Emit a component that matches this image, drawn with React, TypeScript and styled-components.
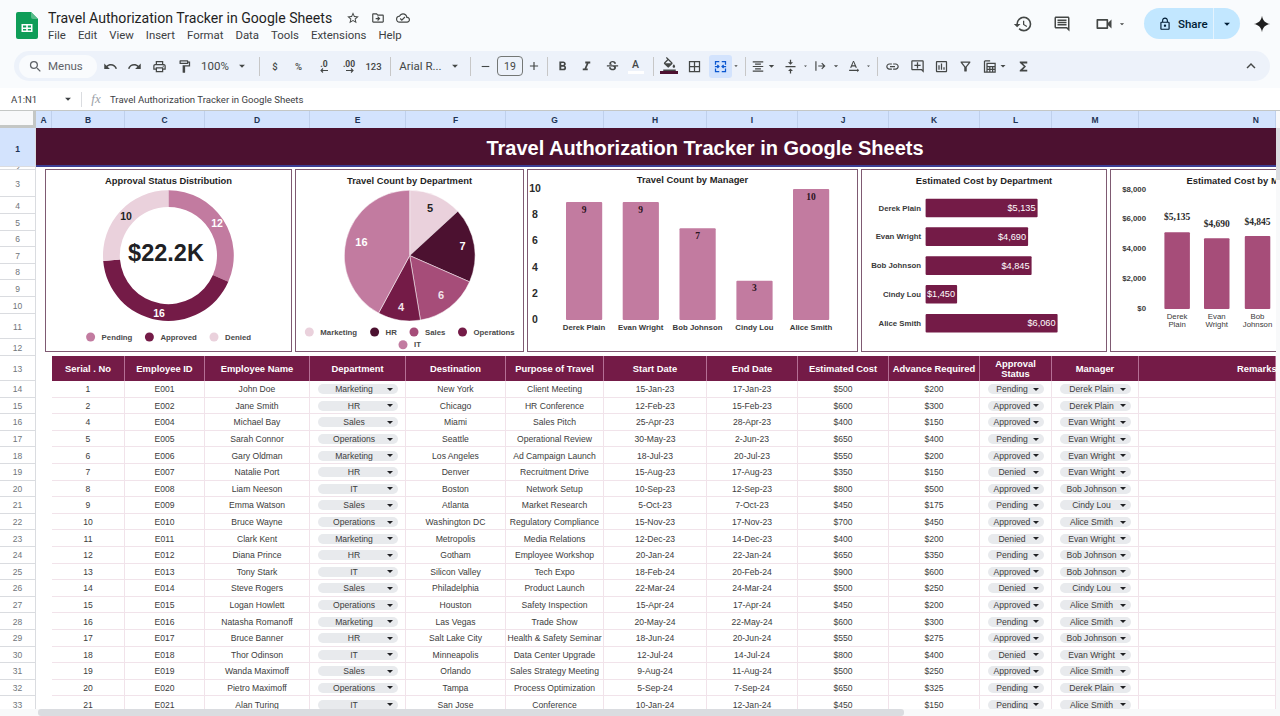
import { createGlobalStyle, styled } from "styled-components";
import {
  MdAdd,
  MdArrowDropDown,
  MdBorderAll,
  MdExpandLess,
  MdFormatAlignCenter,
  MdFormatBold,
  MdFormatColorFill,
  MdFormatItalic,
  MdFunctions,
  MdHistory,
  MdLink,
  MdLockOutline,
  MdOutlineAddComment,
  MdOutlineCloudDone,
  MdOutlineComment,
  MdOutlineDriveFileMove,
  MdOutlineFilterAlt,
  MdOutlineFormatPaint,
  MdOutlineInsertChart,
  MdOutlinePrint,
  MdOutlineTextRotationNone,
  MdOutlineVideocam,
  MdRedo,
  MdRemove,
  MdSearch,
  MdStarBorder,
  MdStrikethroughS,
  MdUndo,
  MdVerticalAlignCenter,
} from "react-icons/md";

const PINK = "#c27ba0";
const ROSE = "#a64d79";
const WINE = "#741b47";
const DARK = "#4c1130";
const PALE = "#ead1dc";

const rows = [
  ["1", "E001", "John Doe", "Marketing", "New York", "Client Meeting", "15-Jan-23", "17-Jan-23", "$500", "$200", "Pending", "Derek Plain"],
  ["2", "E002", "Jane Smith", "HR", "Chicago", "HR Conference", "12-Feb-23", "15-Feb-23", "$600", "$300", "Approved", "Derek Plain"],
  ["4", "E004", "Michael Bay", "Sales", "Miami", "Sales Pitch", "25-Apr-23", "28-Apr-23", "$400", "$150", "Approved", "Evan Wright"],
  ["5", "E005", "Sarah Connor", "Operations", "Seattle", "Operational Review", "30-May-23", "2-Jun-23", "$650", "$400", "Pending", "Evan Wright"],
  ["6", "E006", "Gary Oldman", "Marketing", "Los Angeles", "Ad Campaign Launch", "18-Jul-23", "20-Jul-23", "$550", "$200", "Approved", "Evan Wright"],
  ["7", "E007", "Natalie Port", "HR", "Denver", "Recruitment Drive", "15-Aug-23", "17-Aug-23", "$350", "$150", "Denied", "Evan Wright"],
  ["8", "E008", "Liam Neeson", "IT", "Boston", "Network Setup", "10-Sep-23", "12-Sep-23", "$800", "$500", "Approved", "Bob Johnson"],
  ["9", "E009", "Emma Watson", "Sales", "Atlanta", "Market Research", "5-Oct-23", "7-Oct-23", "$450", "$175", "Pending", "Cindy Lou"],
  ["10", "E010", "Bruce Wayne", "Operations", "Washington DC", "Regulatory Compliance", "15-Nov-23", "17-Nov-23", "$700", "$450", "Approved", "Alice Smith"],
  ["11", "E011", "Clark Kent", "Marketing", "Metropolis", "Media Relations", "12-Dec-23", "14-Dec-23", "$400", "$200", "Denied", "Evan Wright"],
  ["12", "E012", "Diana Prince", "HR", "Gotham", "Employee Workshop", "20-Jan-24", "22-Jan-24", "$650", "$350", "Pending", "Bob Johnson"],
  ["13", "E013", "Tony Stark", "IT", "Silicon Valley", "Tech Expo", "18-Feb-24", "20-Feb-24", "$900", "$600", "Approved", "Bob Johnson"],
  ["14", "E014", "Steve Rogers", "Sales", "Philadelphia", "Product Launch", "22-Mar-24", "24-Mar-24", "$500", "$250", "Denied", "Cindy Lou"],
  ["15", "E015", "Logan Howlett", "Operations", "Houston", "Safety Inspection", "15-Apr-24", "17-Apr-24", "$450", "$200", "Approved", "Alice Smith"],
  ["16", "E016", "Natasha Romanoff", "Marketing", "Las Vegas", "Trade Show", "20-May-24", "22-May-24", "$600", "$300", "Pending", "Alice Smith"],
  ["17", "E017", "Bruce Banner", "HR", "Salt Lake City", "Health & Safety Seminar", "18-Jun-24", "20-Jun-24", "$550", "$275", "Approved", "Bob Johnson"],
  ["18", "E018", "Thor Odinson", "IT", "Minneapolis", "Data Center Upgrade", "12-Jul-24", "14-Jul-24", "$800", "$400", "Denied", "Evan Wright"],
  ["19", "E019", "Wanda Maximoff", "Sales", "Orlando", "Sales Strategy Meeting", "9-Aug-24", "11-Aug-24", "$500", "$250", "Approved", "Alice Smith"],
  ["20", "E020", "Pietro Maximoff", "Operations", "Tampa", "Process Optimization", "5-Sep-24", "7-Sep-24", "$650", "$325", "Pending", "Derek Plain"],
  ["21", "E021", "Alan Turing", "IT", "San Jose", "Conference", "10-Jan-24", "12-Jan-24", "$450", "$150", "Pending", "Alice Smith"],
];

const headers = [
  "Serial . No", "Employee ID", "Employee Name", "Department", "Destination", "Purpose of Travel",
  "Start Date", "End Date", "Estimated Cost", "Advance Required",
];

const menus = ["File", "Edit", "View", "Insert", "Format", "Data", "Tools", "Extensions", "Help"];
const columns = ["B", "C", "D", "E", "F", "G", "H", "I", "J", "K", "L", "M", "N"];
const topRows = [39, 3, 27, 17, 17, 16, 17, 16, 17, 17, 25, 17, 25];
const GRID = "73px 80px 105px 96px 100px 98px 103px 91px 91px 91px 72px 87px 137px";

const GlobalStyle = createGlobalStyle`
  html, body {
    margin: 0;
    height: 716px;
    overflow: hidden;
    background: #fff;
  }
  * { box-sizing: border-box; }
`;

const Page = styled.div`
  position: relative;
  width: 1280px;
  height: 716px;
  overflow: hidden;
  display: flex;
  flex-direction: column;
  background: #f9fbfd;
  font-family: "Liberation Sans", Arial, sans-serif;
`;

const TopBar = styled.header`
  height: 51px;
  flex: none;
  display: flex;
  padding: 8px 0 0 16px;
`;

const TitleBlock = styled.div`
  margin-left: 10px;
  display: flex;
  flex-direction: column;
`;

const TitleLine = styled.div`
  display: flex;
  align-items: center;
  height: 20px;
  color: #1f1f1f;
  font: 400 14.1px Roboto, sans-serif;
`;

const TitleIcons = styled.div`
  display: flex;
  align-items: center;
  gap: 11px;
  margin-left: 14px;
  color: #444746;
`;

const MenuLine = styled.nav`
  display: flex;
  gap: 12px;
  font: 400 11.4px/15px Roboto, sans-serif;
  color: #3c4043;
`;

const Actions = styled.div`
  margin-left: auto;
  display: flex;
  align-items: flex-start;
  color: #444746;
`;

const ActionIcon = styled.div<{ $w: number }>`
  width: ${(p) => p.$w}px;
  height: 31px;
  display: flex;
  align-items: center;
  justify-content: center;
`;

const VideoIcon = styled(ActionIcon)`
  margin-left: 9px;
`;

const SparkSlot = styled(ActionIcon)`
  padding-left: 4px;
`;

const ShareButton = styled.div`
  width: 96px;
  height: 31px;
  margin-left: 17px;
  border-radius: 16px;
  background: #c2e7ff;
  display: flex;
  align-items: center;
  color: #001d35;
  font: 500 11.5px Roboto, sans-serif;
`;

const ShareMain = styled.div`
  flex: 1;
  height: 100%;
  display: flex;
  align-items: center;
  gap: 6px;
  padding-left: 14px;
  border-right: 1px solid #e4f3fe;
`;

const ShareCaret = styled.div`
  width: 26px;
  display: flex;
  justify-content: center;
`;

const Toolbar = styled.div`
  height: 30px;
  flex: none;
  margin: 0 10px 0 14px;
  padding-left: 5px;
  display: flex;
  align-items: center;
  border-radius: 15px;
  background: #edf2fa;
  color: #444746;
`;

const SearchPill = styled.div`
  width: 78px;
  height: 23px;
  flex: none;
  margin-right: 1px;
  padding-left: 9px;
  display: flex;
  align-items: center;
  gap: 5px;
  border-radius: 12px;
  background: #f9fbfd;
  color: #5f6368;
  font: 400 11.5px Roboto, sans-serif;
`;

const Tool = styled.div<{ $w: number; $on?: boolean }>`
  width: ${(p) => p.$w}px;
  height: 23px;
  flex: none;
  display: flex;
  align-items: center;
  justify-content: center;
  border-radius: 3px;
  background: ${(p) => (p.$on ? "#d3e3fd" : "transparent")};
  color: ${(p) => (p.$on ? "#0b57d0" : "#444746")};
  font: 400 11.5px Roboto, sans-serif;
`;

const ToolSmall = styled(Tool)`
  font-size: 9.5px;
  font-weight: 500;
`;

const Stacked = styled.span`
  display: flex;
  flex-direction: column;
  align-items: center;
  font: 700 8.5px/8px Roboto, sans-serif;
`;

const Sep = styled.div`
  width: 1px;
  height: 19px;
  flex: none;
  margin: 0 5px;
  background: #c7c7c7;
`;

const SizeBox = styled.div`
  width: 26px;
  height: 20px;
  flex: none;
  margin: 0 3px;
  display: flex;
  align-items: center;
  justify-content: center;
  border: 1px solid #747775;
  border-radius: 4px;
  color: #444746;
  font: 400 10.5px Roboto, sans-serif;
`;

const ColorLetter = styled.span<{ $bar: string }>`
  display: flex;
  flex-direction: column;
  align-items: center;
  font: 500 10.5px/11px Roboto, sans-serif;
  &::after {
    content: "";
    width: 16px;
    height: 3px;
    margin-top: 1px;
    background: ${(p) => p.$bar};
  }
`;

const FillIcon = styled.span`
  display: flex;
  flex-direction: column;
  align-items: center;
  height: 19px;
  overflow: hidden;
  &::after {
    content: "";
    flex: none;
    width: 18px;
    height: 3px;
    margin-top: -1px;
    background: ${DARK};
  }
`;

const ToolbarEnd = styled.div`
  margin-left: auto;
  margin-right: 10px;
  display: flex;
  color: #444746;
`;

const FormulaBar = styled.div`
  height: 23px;
  flex: none;
  margin-top: 7px;
  display: flex;
  align-items: center;
  background: #fff;
  border-bottom: 1px solid #c4c7c5;
  color: #3c4043;
  font: 400 9.6px Roboto, sans-serif;
`;

const NameBox = styled.div`
  width: 82px;
  height: 15px;
  padding: 0 6px 0 11px;
  display: flex;
  align-items: center;
  justify-content: space-between;
  border-right: 1px solid #dadce0;
`;

const FxMark = styled.span`
  width: 28px;
  text-align: center;
  color: #9aa0a6;
  font: italic 400 13px "Liberation Serif", serif;
`;

const ColumnBar = styled.div`
  height: 17px;
  flex: none;
  display: flex;
  background: #d3e3fd;
`;

const Corner = styled.div`
  width: 36px;
  flex: none;
  background: #f8f9fa;
  border-right: 3px solid #c4c7c5;
  border-bottom: 3px solid #c4c7c5;
`;

const ColumnGrid = styled.div`
  display: grid;
  width: 1240px;
  grid-template-columns: 16px ${GRID};
`;

const ColumnLabel = styled.div<{ $far?: boolean }>`
  display: flex;
  align-items: center;
  justify-content: ${(p) => (p.$far ? "flex-end" : "center")};
  padding-right: ${(p) => (p.$far ? "16px" : "0")};
  border-right: 1px solid #bfd0ec;
  color: #1f3354;
  font-size: 8.5px;
  font-weight: 700;
`;

const Sheet = styled.div`
  flex: 1;
  min-height: 0;
  display: flex;
  overflow: hidden;
  background: #fff;
`;

const RowHeaders = styled.div`
  width: 36px;
  flex: none;
  background: #fff;
`;

const RowLabel = styled.div<{ $h: number; $on?: boolean }>`
  height: ${(p) => p.$h}px;
  padding-top: ${(p) => (p.$on ? "4px" : p.$h > 10 ? "1px" : "0")};
  display: flex;
  align-items: center;
  justify-content: center;
  overflow: hidden;
  background: ${(p) => (p.$on ? "#d3e3fd" : "#fff")};
  border-right: 1px solid #dadce0;
  border-bottom: 1px solid #dadce0;
  color: ${(p) => (p.$on ? "#1f3354" : "#70757a")};
  font-size: 8.5px;
  font-weight: ${(p) => (p.$on ? 700 : 400)};
`;

const Canvas = styled.div`
  width: 1240px;
  flex: none;
  overflow: hidden;
`;

const Banner = styled.div`
  height: 39px;
  padding: 4px 0 0 98px;
  display: flex;
  align-items: center;
  justify-content: center;
  background: ${DARK};
  border-bottom: 2px solid #3c3f95;
  color: #fff;
  font-size: 20px;
  font-weight: 700;
`;

const ChartRow = styled.div`
  height: 189px;
  padding: 2px 0 0 9px;
  display: flex;
  gap: 3px;
  overflow: hidden;
`;

const ChartCard = styled.section<{ $w: number }>`
  width: ${(p) => p.$w}px;
  height: 183px;
  flex: none;
  border: 1px solid #7f5a72;
  background: #fff;
`;

const ChartTitle = styled.h3<{ $up?: boolean }>`
  height: 20px;
  margin: 0;
  padding-top: ${(p) => (p.$up ? "5px" : "6px")};
  text-align: center;
  color: #1f1f1f;
  font-size: 9.4px;
  line-height: 10px;
  font-weight: 700;
  white-space: nowrap;
`;

const ChartArea = styled.svg`
  display: block;
  overflow: visible;
`;

const Label = styled.text<{ $size?: number; $weight?: number; $fill?: string; $serif?: boolean }>`
  font-family: ${(p) => (p.$serif ? '"Liberation Serif", serif' : '"Liberation Sans", sans-serif')};
  font-size: ${(p) => p.$size ?? 8}px;
  font-weight: ${(p) => p.$weight ?? 700};
  fill: ${(p) => p.$fill ?? "#3a3a3a"};
  dominant-baseline: central;
`;

const Table = styled.div`
  margin-left: 16px;
  width: 1224px;
`;

const HeadRow = styled.div`
  height: 25px;
  display: grid;
  grid-template-columns: ${GRID};
  background: ${WINE};
  color: #fff;
  font-size: 9.4px;
  font-weight: 700;
`;

const HeadCell = styled.div<{ $indent?: number }>`
  display: flex;
  align-items: center;
  justify-content: ${(p) => (p.$indent ? "flex-start" : "center")};
  padding-left: ${(p) => p.$indent ?? 0}px;
  text-align: center;
  line-height: 9.5px;
  white-space: nowrap;
  border-right: 1px solid #b56f95;
`;

const DataRow = styled.div`
  height: 16.6px;
  display: grid;
  grid-template-columns: ${GRID};
  color: #3c3c3c;
  font-size: 8.6px;
  border-bottom: 1px solid #f1e3ea;
`;

const Cell = styled.div`
  padding-top: 1px;
  display: flex;
  align-items: center;
  justify-content: center;
  white-space: nowrap;
  border-right: 1px solid #f1e3ea;
`;

const Pill = styled.div`
  width: 100%;
  height: 10px;
  margin: 0 7px 0 8px;
  padding-right: 5px;
  display: flex;
  align-items: center;
  border-radius: 5px;
  background: #e8eaed;
  &::after {
    content: "";
    flex: none;
    border-left: 3px solid transparent;
    border-right: 3px solid transparent;
    border-top: 3.5px solid #202124;
  }
`;

const PillText = styled.span`
  flex: 1;
  text-align: center;
  padding-left: 3px;
`;

const ScrollTrackX = styled.div`
  position: absolute;
  left: 0;
  right: 0;
  bottom: 0;
  height: 7px;
  background: #f8f9fa;
`;

const ScrollThumbX = styled.div`
  position: absolute;
  left: 38px;
  width: 866px;
  top: 0;
  bottom: 0;
  border-radius: 3px;
  background: #dadce0;
`;

const ScrollTrackY = styled.div`
  position: absolute;
  right: 0;
  top: 111px;
  bottom: 0;
  width: 4px;
  background: #f8f9fa;
`;

const ScrollThumbY = styled.div`
  position: absolute;
  left: 0;
  right: 0;
  top: 17px;
  height: 52px;
  background: #dadce0;
`;

function SheetsLogo() {
  return (
    <svg width="22" height="27" viewBox="0 0 22 27" style={{ flex: "none", marginTop: 4 }}>
      <path d="M2 0h13l7 7v18a2 2 0 0 1-2 2H2a2 2 0 0 1-2-2V2a2 2 0 0 1 2-2z" fill="#0f9d58" />
      <path d="M15 0l7 7h-5a2 2 0 0 1-2-2z" fill="#57bb8a" />
      <path d="M5.5 12h11v8h-11z M7 13.5v2h3.2v-2z M11.8 13.5v2H15v-2z M7 17v1.5h3.2V17z M11.8 17v1.5H15V17z" fill="#fff" fillRule="evenodd" />
    </svg>
  );
}

function Spark() {
  return (
    <svg width="18" height="18" viewBox="0 0 24 24">
      <path d="M12 1c1 6.5 4.5 10 11 11-6.5 1-10 4.5-11 11-1-6.5-4.5-10-11-11 6.5-1 10-4.5 11-11z" fill="#1f1f1f" />
    </svg>
  );
}

function MergeIcon() {
  return (
    <svg width="15" height="15" viewBox="0 0 24 24" fill="none" stroke="currentColor" strokeWidth="2">
      <path d="M4 9V4h6M14 4h6v5M4 15v5h6M14 20h6v-5M3 12h6M7 9.5l2.5 2.5L7 14.5M21 12h-6M17 9.5L14.5 12l2.5 2.5" />
    </svg>
  );
}

function OverflowIcon() {
  return (
    <svg width="14" height="14" viewBox="0 0 24 24" fill="none" stroke="currentColor" strokeWidth="2">
      <path d="M5 4v16M9 12h11M15 7l5 5-5 5" />
    </svg>
  );
}

function TableCalcIcon() {
  return (
    <svg width="15" height="15" viewBox="0 0 24 24" fill="none" stroke="currentColor" strokeWidth="2">
      <path d="M4 3h9M4 3v18h3M8 7h13v14H8zM8 12h13M8 16.5h13M12.5 12v9M17 12v9" />
    </svg>
  );
}

function SmallArrow({ back }: { back?: boolean }) {
  return (
    <svg width="9" height="5" viewBox="0 0 9 5" fill="none" stroke="currentColor" strokeWidth="1.1">
      <path d={back ? "M8 2.5H1M3 .5L1 2.5l2 2" : "M1 2.5h7M6 .5l2 2-2 2"} />
    </svg>
  );
}

// slice outline for the pie and the donut; angles are clockwise from 12 o'clock
function slice(cx: number, cy: number, r: number, inner: number, from: number, to: number) {
  const at = (rad: number, a: number) => {
    const t = (a * Math.PI) / 180;
    return `${(cx + rad * Math.sin(t)).toFixed(2)} ${(cy - rad * Math.cos(t)).toFixed(2)}`;
  };
  const large = to - from > 180 ? 1 : 0;
  if (inner === 0) {
    return `M${cx} ${cy}L${at(r, from)}A${r} ${r} 0 ${large} 1 ${at(r, to)}Z`;
  }
  return `M${at(r, from)}A${r} ${r} 0 ${large} 1 ${at(r, to)}L${at(inner, to)}A${inner} ${inner} 0 ${large} 0 ${at(inner, from)}Z`;
}

function slices(values: number[]) {
  const total = values.reduce((a, b) => a + b, 0);
  let run = 0;
  return values.map((v) => {
    const from = (run / total) * 360;
    run += v;
    return [from, (run / total) * 360];
  });
}

function Legend({ items }: { items: { x: number; y: number; color: string; text: string }[] }) {
  return (
    <>
      {items.map((it) => (
        <g key={it.text}>
          <circle cx={it.x} cy={it.y} r={4.5} fill={it.color} />
          <Label x={it.x + 11} y={it.y} $size={7.8} $fill="#4a4a4a">
            {it.text}
          </Label>
        </g>
      ))}
    </>
  );
}

function DonutChart() {
  const colors = [PINK, WINE, PALE];
  return (
    <ChartCard $w={247}>
      <ChartTitle>Approval Status Distribution</ChartTitle>
      <ChartArea width={245} height={161} viewBox="46 190 245 161">
        {slices([12, 16, 10]).map(([a, b], i) => (
          <path key={i} d={slice(168.4, 255.6, 65.4, 48.6, a, b)} fill={colors[i]} />
        ))}
        <Label x={217} y={223} $size={10.5} $fill="#fff" textAnchor="middle">12</Label>
        <Label x={159} y={313} $size={10.5} $fill="#fff" textAnchor="middle">16</Label>
        <Label x={126} y={216} $size={10.5} $fill="#1f1f1f" textAnchor="middle">10</Label>
        <Label x={166} y={253} $size={23.5} $fill="#202124" textAnchor="middle">$22.2K</Label>
        <Legend
          items={[
            { x: 90.6, y: 337, color: PINK, text: "Pending" },
            { x: 149.4, y: 337, color: WINE, text: "Approved" },
            { x: 214, y: 337, color: PALE, text: "Denied" },
          ]}
        />
      </ChartArea>
    </ChartCard>
  );
}

function PieChart() {
  const colors = [PALE, DARK, ROSE, WINE, PINK];
  return (
    <ChartCard $w={229}>
      <ChartTitle>Travel Count by Department</ChartTitle>
      <ChartArea width={227} height={161} viewBox="296 190 227 161">
        {slices([5, 7, 6, 4, 16]).map(([a, b], i) => (
          <path key={i} d={slice(409.7, 255.6, 65.4, 0, a, b)} fill={colors[i]} stroke="#fff" strokeWidth={0.5} />
        ))}
        <Label x={430} y={208} $size={11} $fill="#1f1f1f" textAnchor="middle">5</Label>
        <Label x={462.5} y={245.5} $size={11} $fill="#fff" textAnchor="middle">7</Label>
        <Label x={441} y={295} $size={11} $fill="#f3e3ea" textAnchor="middle">6</Label>
        <Label x={401} y={307} $size={11} $fill="#f3e3ea" textAnchor="middle">4</Label>
        <Label x={361.4} y={242.4} $size={11} $fill="#fff" textAnchor="middle">16</Label>
        <Legend
          items={[
            { x: 309.3, y: 332, color: PALE, text: "Marketing" },
            { x: 374.6, y: 332, color: DARK, text: "HR" },
            { x: 414, y: 332, color: ROSE, text: "Sales" },
            { x: 462.5, y: 332, color: WINE, text: "Operations" },
            { x: 403, y: 344.8, color: PINK, text: "IT" },
          ]}
        />
      </ChartArea>
    </ChartCard>
  );
}

const managerCounts = [
  { name: "Derek Plain", count: 9, x: 566 },
  { name: "Evan Wright", count: 9, x: 622.7 },
  { name: "Bob Johnson", count: 7, x: 679.5 },
  { name: "Cindy Lou", count: 3, x: 736.4 },
  { name: "Alice Smith", count: 10, x: 793 },
];

function ManagerBars() {
  return (
    <ChartCard $w={331}>
      <ChartTitle $up>Travel Count by Manager</ChartTitle>
      <ChartArea width={329} height={161} viewBox="528 190 329 161">
        {[10, 8, 6, 4, 2, 0].map((v, i) => (
          <Label key={v} x={535} y={188 + i * 26.2} $size={10.5} $fill="#2b2b2b" textAnchor="middle">{v}</Label>
        ))}
        {managerCounts.map((m) => (
          <g key={m.name}>
            <rect x={m.x} y={320 - m.count * 13.1} width={36.2} height={m.count * 13.1} rx={1} fill={PINK} />
            <Label x={m.x + 18} y={320 - m.count * 13.1 + 7.5} $size={9.5} $serif $fill="#2b1420" textAnchor="middle">{m.count}</Label>
            <Label x={m.x + 18} y={327.7} $size={7.8} textAnchor="middle">{m.name}</Label>
          </g>
        ))}
      </ChartArea>
    </ChartCard>
  );
}

const costBars = [
  { name: "Derek Plain", label: "$5,135", y: 198.7, w: 112 },
  { name: "Evan Wright", label: "$4,690", y: 227.3, w: 102.5 },
  { name: "Bob Johnson", label: "$4,845", y: 256.3, w: 106 },
  { name: "Cindy Lou", label: "$1,450", y: 285, w: 31.5 },
  { name: "Alice Smith", label: "$6,060", y: 314, w: 132 },
];

function DepartmentCost() {
  return (
    <ChartCard $w={246}>
      <ChartTitle>Estimated Cost by Department</ChartTitle>
      <ChartArea width={244} height={161} viewBox="862 190 244 161">
        {costBars.map((b) => (
          <g key={b.name}>
            <Label x={921} y={b.y + 9.3} $size={7.8} textAnchor="end">{b.name}</Label>
            <rect x={925.6} y={b.y} width={b.w} height={18.6} rx={1} fill={WINE} />
            <Label x={925.6 + b.w - 2} y={b.y + 9.3} $size={9.2} $weight={400} $fill="#fff" textAnchor="end">{b.label}</Label>
          </g>
        ))}
      </ChartArea>
    </ChartCard>
  );
}

const managerCosts = [
  { top: "Derek", bottom: "Plain", label: "$5,135", x: 1164.4, y: 232.3, ly: 217 },
  { top: "Evan", bottom: "Wright", label: "$4,690", x: 1204, y: 238.3, ly: 224 },
  { top: "Bob", bottom: "Johnson", label: "$4,845", x: 1244.8, y: 236, ly: 221.7 },
];

function ManagerCost() {
  return (
    <ChartCard $w={276}>
      <ChartTitle>Estimated Cost by Manager</ChartTitle>
      <ChartArea width={274} height={161} viewBox="1111 190 274 161">
        {["$8,000", "$6,000", "$4,000", "$2,000", "$0"].map((v, i) => (
          <Label key={v} x={1146} y={189 + i * 29.9} $size={7.8} textAnchor="end">{v}</Label>
        ))}
        {managerCosts.map((m) => (
          <g key={m.top}>
            <rect x={m.x} y={m.y} width={25.5} height={309 - m.y} rx={1} fill={ROSE} />
            <Label x={m.x + 12.7} y={m.ly} $size={9.5} $serif $fill="#2b2b2b" textAnchor="middle">{m.label}</Label>
            <Label x={m.x + 12.7} y={316.7} $size={7.8} $weight={400} textAnchor="middle">{m.top}</Label>
            <Label x={m.x + 12.7} y={324.5} $size={7.8} $weight={400} textAnchor="middle">{m.bottom}</Label>
          </g>
        ))}
      </ChartArea>
    </ChartCard>
  );
}

function Dropdown({ value }: { value: string }) {
  return (
    <Pill>
      <PillText>{value}</PillText>
    </Pill>
  );
}

export default function App() {
  return (
    <Page>
      <GlobalStyle />
      <TopBar>
        <SheetsLogo />
        <TitleBlock>
          <TitleLine>
            Travel Authorization Tracker in Google Sheets
            <TitleIcons>
              <MdStarBorder size={14} />
              <MdOutlineDriveFileMove size={14} />
              <MdOutlineCloudDone size={14} />
            </TitleIcons>
          </TitleLine>
          <MenuLine>
            {menus.map((m) => (
              <span key={m}>{m}</span>
            ))}
          </MenuLine>
        </TitleBlock>
        <Actions>
          <ActionIcon $w={38}>
            <MdHistory size={20} />
          </ActionIcon>
          <ActionIcon $w={40}>
            <MdOutlineComment size={18} />
          </ActionIcon>
          <VideoIcon $w={26}>
            <MdOutlineVideocam size={20} />
          </VideoIcon>
          <ActionIcon $w={10}>
            <MdArrowDropDown size={14} />
          </ActionIcon>
          <ShareButton>
            <ShareMain>
              <MdLockOutline size={14} />
              Share
            </ShareMain>
            <ShareCaret>
              <MdArrowDropDown size={14} />
            </ShareCaret>
          </ShareButton>
          <SparkSlot $w={40}>
            <Spark />
          </SparkSlot>
        </Actions>
      </TopBar>

      <Toolbar>
        <SearchPill>
          <MdSearch size={15} />
          Menus
        </SearchPill>
        <Tool $w={25}><MdUndo size={15} /></Tool>
        <Tool $w={23}><MdRedo size={15} /></Tool>
        <Tool $w={26}><MdOutlinePrint size={15} /></Tool>
        <Tool $w={24}><MdOutlineFormatPaint size={15} /></Tool>
        <Tool $w={58}>100%<MdArrowDropDown size={14} style={{ marginLeft: 6 }} /></Tool>
        <Sep />
        <ToolSmall $w={20}>$</ToolSmall>
        <ToolSmall $w={27}>%</ToolSmall>
        <Tool $w={24}><Stacked>.0<SmallArrow back /></Stacked></Tool>
        <Tool $w={26}><Stacked>.00<SmallArrow /></Stacked></Tool>
        <ToolSmall $w={23}>123</ToolSmall>
        <Sep />
        <Tool $w={69}>Arial R...<MdArrowDropDown size={14} style={{ marginLeft: 6 }} /></Tool>
        <Sep />
        <Tool $w={18}><MdRemove size={13} /></Tool>
        <SizeBox>19</SizeBox>
        <Tool $w={16}><MdAdd size={14} /></Tool>
        <Sep />
        <Tool $w={18}><MdFormatBold size={15} /></Tool>
        <Tool $w={30}><MdFormatItalic size={15} /></Tool>
        <Tool $w={22}><MdStrikethroughS size={15} /></Tool>
        <Tool $w={25}><ColorLetter $bar="#ffffff">A</ColorLetter></Tool>
        <Sep />
        <Tool $w={20}>
          <FillIcon><MdFormatColorFill size={15} /></FillIcon>
        </Tool>
        <Tool $w={30}><MdBorderAll size={15} /></Tool>
        <Tool $w={23} $on><MergeIcon /></Tool>
        <Tool $w={8}><MdArrowDropDown size={14} /></Tool>
        <Sep />
        <Tool $w={14}><MdFormatAlignCenter size={15} /></Tool>
        <Tool $w={13}><MdArrowDropDown size={14} /></Tool>
        <Tool $w={24}><MdVerticalAlignCenter size={15} /></Tool>
        <Tool $w={7}><MdArrowDropDown size={14} /></Tool>
        <Tool $w={22}><OverflowIcon /></Tool>
        <Tool $w={10}><MdArrowDropDown size={14} /></Tool>
        <Tool $w={24}><MdOutlineTextRotationNone size={15} /></Tool>
        <Tool $w={7}><MdArrowDropDown size={14} /></Tool>
        <Sep />
        <Tool $w={18}><MdLink size={15} /></Tool>
        <Tool $w={32}><MdOutlineAddComment size={15} /></Tool>
        <Tool $w={17}><MdOutlineInsertChart size={15} /></Tool>
        <Tool $w={31}><MdOutlineFilterAlt size={15} /></Tool>
        <Tool $w={16}><TableCalcIcon /></Tool>
        <Tool $w={12}><MdArrowDropDown size={14} /></Tool>
        <Tool $w={28}><MdFunctions size={15} /></Tool>
        <ToolbarEnd>
          <MdExpandLess size={18} />
        </ToolbarEnd>
      </Toolbar>

      <FormulaBar>
        <NameBox>
          A1:N1
          <MdArrowDropDown size={14} />
        </NameBox>
        <FxMark>fx</FxMark>
        Travel Authorization Tracker in Google Sheets
      </FormulaBar>

      <ColumnBar>
        <Corner />
        <ColumnGrid>
          <ColumnLabel>A</ColumnLabel>
          {columns.map((c) => (
            <ColumnLabel key={c} $far={c === "N"}>{c}</ColumnLabel>
          ))}
        </ColumnGrid>
      </ColumnBar>

      <Sheet>
        <RowHeaders>
          {topRows.map((h, i) => (
            <RowLabel key={i} $h={h} $on={i === 0}>{i + 1}</RowLabel>
          ))}
          {rows.map((_, i) => (
            <RowLabel key={i} $h={16.6}>{i + 14}</RowLabel>
          ))}
        </RowHeaders>
        <Canvas>
          <Banner>Travel Authorization Tracker in Google Sheets</Banner>
          <ChartRow>
            <DonutChart />
            <PieChart />
            <ManagerBars />
            <DepartmentCost />
            <ManagerCost />
          </ChartRow>
          <Table>
            <HeadRow>
              {headers.map((h) => (
                <HeadCell key={h}>{h}</HeadCell>
              ))}
              <HeadCell>Approval<br />Status</HeadCell>
              <HeadCell>Manager</HeadCell>
              <HeadCell $indent={98}>Remarks</HeadCell>
            </HeadRow>
            {rows.map((r) => (
              <DataRow key={r[0]}>
                {r.map((v, i) => (
                  <Cell key={i}>{i === 3 || i >= 10 ? <Dropdown value={v} /> : v}</Cell>
                ))}
                <Cell />
              </DataRow>
            ))}
          </Table>
        </Canvas>
      </Sheet>

      <ScrollTrackY>
        <ScrollThumbY />
      </ScrollTrackY>
      <ScrollTrackX>
        <ScrollThumbX />
      </ScrollTrackX>
    </Page>
  );
}
